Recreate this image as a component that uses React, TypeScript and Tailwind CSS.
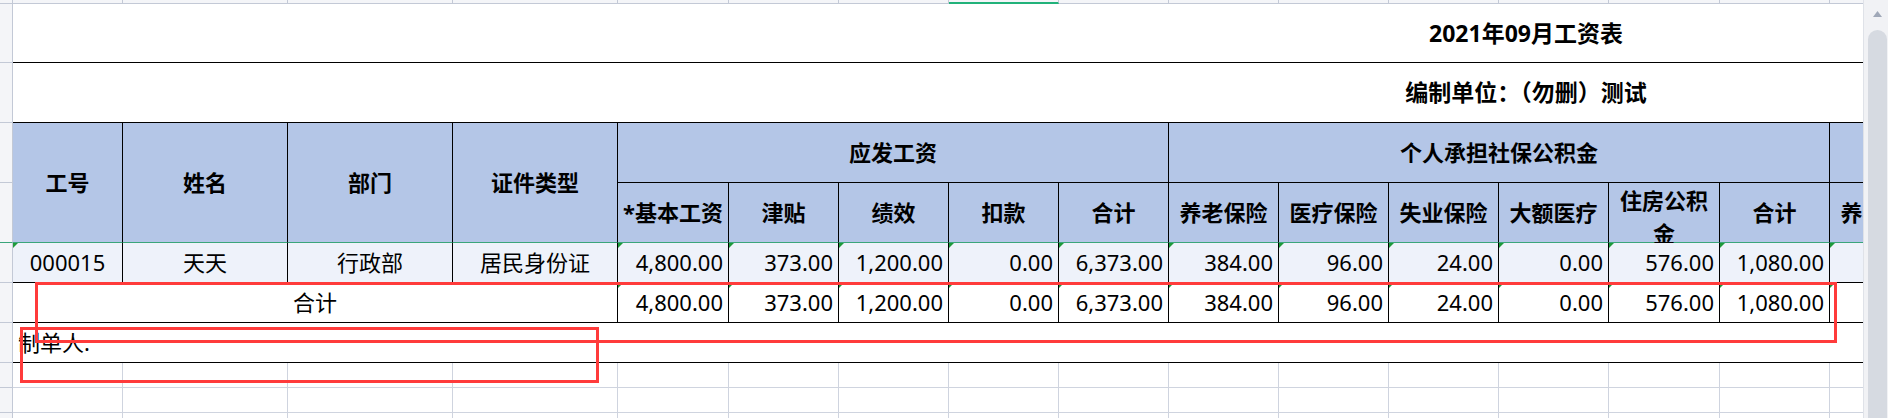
import React from 'react';

const FONT = '"Noto Sans", "Noto Sans CJK SC", sans-serif';

const SUB_HEADERS = [
  '*基本工资',
  '津贴',
  '绩效',
  '扣款',
  '合计',
  '养老保险',
  '医疗保险',
  '失业保险',
  '大额医疗',
  '住房公积金',
  '合计',
  '养老保险',
];

const AMOUNTS = [
  '4,800.00',
  '373.00',
  '1,200.00',
  '0.00',
  '6,373.00',
  '384.00',
  '96.00',
  '24.00',
  '0.00',
  '576.00',
  '1,080.00',
  '',
];

// 16 sheet columns after the row gutter; the last one runs past the visible edge
const COL_COUNT = 16;

function Gutter({ green = false }: { green?: boolean }) {
  return (
    <div
      className={
        'bg-[#f4f5f8] border-r border-r-[#c3c9d6] border-b ' +
        (green ? 'border-b-[#3aa57a]' : 'border-b-[#c3c9d6]')
      }
    />
  );
}

// little green "number stored as text" corner
function Flag() {
  return (
    <span className="absolute left-0 top-0 w-0 h-0 border-t-[5px] border-t-[#1f9a3a] border-r-[5px] border-r-transparent" />
  );
}

export default function App() {
  return (
    <div
      className="relative flex w-[1888px] h-[418px] overflow-hidden bg-white text-black"
      style={{ fontFamily: FONT }}
    >
      <div className="w-[1863px] h-full overflow-hidden shrink-0">
        <div className="grid grid-cols-[13px_110px_165px_165px_165px_111px_110px_110px_110px_110px_110px_110px_110px_110px_111px_110px_110px] grid-rows-[4px_59px_60px_60px_60px_40px_40px_40px_25px_25px_25px] w-max">
          {/* column letter strip */}
          <div className="bg-[#f4f5f8] border-r border-b border-[#c3c9d6]" />
          {Array.from({ length: COL_COUNT }).map((_, i) => (
            <div
              key={'s' + i}
              className={
                'bg-[#f4f5f8] border-r border-r-[#c3c9d6] ' +
                (i === 7 ? 'border-b-2 border-b-[#21b27a]' : 'border-b border-b-[#c3c9d6]')
              }
            />
          ))}

          {/* title */}
          <Gutter />
          <div className="col-span-16 overflow-hidden border-b border-black">
            <div className="w-[3026px] h-full flex items-center justify-center text-[23px] font-bold">
              2021年09月工资表
            </div>
          </div>

          {/* unit */}
          <Gutter />
          <div className="col-span-16 overflow-hidden border-b border-black">
            <div className="w-[3026px] h-full flex items-center justify-center text-[23px] font-bold">
              编制单位：（勿删）测试
            </div>
          </div>

          {/* header row 1 */}
          <Gutter />
          {['工号', '姓名', '部门', '证件类型'].map((t) => (
            <div
              key={t}
              className="row-span-2 bg-[#b4c6e7] border-r border-r-black border-b border-b-[#3aa57a] flex items-center justify-center text-[22px] font-bold"
            >
              {t}
            </div>
          ))}
          <div className="col-span-5 bg-[#b4c6e7] border-r border-b border-black flex items-center justify-center text-[22px] font-bold">
            应发工资
          </div>
          <div className="col-span-6 bg-[#b4c6e7] border-r border-b border-black flex items-center justify-center text-[22px] font-bold">
            个人承担社保公积金
          </div>
          <div className="bg-[#b4c6e7] border-r border-b border-black" />

          {/* header row 2 */}
          <Gutter green />
          {SUB_HEADERS.map((t, i) => {
            const wraps = t === '住房公积金';
            return (
              <div
                key={'h' + i}
                className={
                  'bg-[#b4c6e7] border-r border-r-black border-b border-b-[#3aa57a] flex justify-center text-center text-[22px] font-bold px-[2px] ' +
                  (wraps ? 'items-start pt-[1px] leading-[33px]' : 'items-center whitespace-nowrap')
                }
              >
                {t}
              </div>
            );
          })}

          {/* data row */}
          <Gutter />
          {['000015', '天天', '行政部', '居民身份证'].map((t, i) => (
            <div
              key={'d' + i}
              className="relative bg-[#eef2fa] border-r border-b border-black flex items-center justify-center text-[22px]"
            >
              {i === 0 && <Flag />}
              {t}
            </div>
          ))}
          {AMOUNTS.map((v, i) => (
            <div
              key={'a' + i}
              className="relative bg-[#eef2fa] border-r border-b border-black flex items-center justify-end pr-[5px] text-[22px]"
            >
              <Flag />
              {v}
            </div>
          ))}

          {/* totals */}
          <Gutter />
          <div className="col-span-4 border-r border-b border-black flex items-center justify-center text-[22px]">
            合计
          </div>
          {AMOUNTS.map((v, i) => (
            <div
              key={'t' + i}
              className="relative border-r border-b border-black flex items-center justify-end pr-[5px] text-[22px]"
            >
              <Flag />
              {v}
            </div>
          ))}

          {/* prepared by */}
          <Gutter />
          <div className="col-span-16 border-b border-black flex items-center pl-[5px] text-[22px]">
            制单人.
          </div>

          {/* empty sheet rows */}
          {[0, 1, 2].map((r) => (
            <React.Fragment key={'e' + r}>
              <Gutter />
              {Array.from({ length: COL_COUNT }).map((_, i) => (
                <div key={i} className="border-r border-b border-[#cfd4df]" />
              ))}
            </React.Fragment>
          ))}
        </div>
      </div>

      {/* vertical scrollbar */}
      <div className="w-[25px] h-full bg-[#f1f2f5] border-l border-[#dfe2e8] flex flex-col items-center pl-[2px]">
        <svg width="9" height="6" viewBox="0 0 9 6" className="mt-[11px]">
          <path d="M4.5 0L9 6H0z" fill="#a0a8b8" />
        </svg>
        <div className="mt-[13px] w-[19px] flex-1 rounded-t-full bg-[#d6dae1]" />
      </div>

      {/* red annotation boxes */}
      <div className="absolute left-[35px] top-[282px] w-[1802px] h-[61px] border-[3px] border-[#ff3b3b] pointer-events-none" />
      <div className="absolute left-[20px] top-[327px] w-[579px] h-[56px] border-[3px] border-[#ff3b3b] pointer-events-none" />
    </div>
  );
}
